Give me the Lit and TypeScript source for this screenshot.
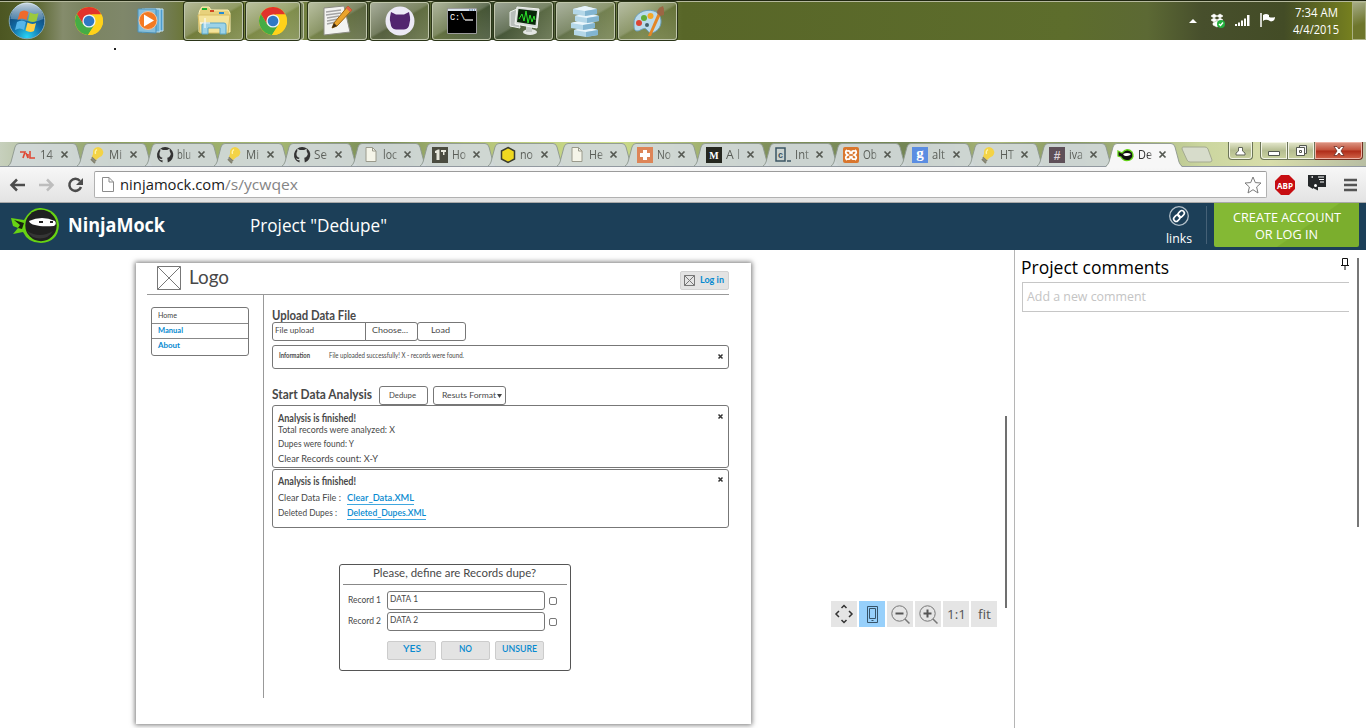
import { LitElement, html, svg, css } from "lit";
import { customElement } from "lit/decorators.js";

// One line of text set to an exact measure. The box starts one font size above the baseline.
const line = (text: string, width: number, size: number, cls = "") => html`<svg class="t ${cls}" width=${width} height=${Math.round(size * 1.3)}>
  <text x="0" y=${size} font-size=${size} textLength=${width} lengthAdjust="spacingAndGlyphs">${text}</text></svg>`;

const textStyles = css`
  .t { display: block; overflow: visible; flex: none; fill: currentColor; font-family: "Open Sans", "Noto Sans", sans-serif; }
  .bold { font-weight: 700; }
  .semi { font-weight: 600; }
  svg { display: block; flex: none; overflow: visible; }
  * { box-sizing: border-box; }
`;

const chrome = html`<svg width="28" height="28" viewBox="-14 -14 28 28">
  <circle r="14" fill="#ffd21a"/>
  <path d="M-12.1-7A14 14 0 0 1 12.3-6.5H0L-5.8 3.2Z" fill="#e2332b"/>
  <path d="M-12.1-7A14 14 0 0 0-1 14L5.8 3.4-5.8 3.2Z" fill="#45ac45"/>
  <path d="M12.3-6.5A14 14 0 0 1-1 14L5.8 3.2 3-6.5Z" fill="#ffd21a"/>
  <circle r="6.6" fill="#eef4f6"/><circle r="5.3" fill="#2f78c4"/></svg>`;

const orb = html`<svg width="38" height="38" viewBox="-19 -19 38 38">
  <defs><radialGradient id="orb" cx=".5" cy=".95" r=".9"><stop offset="0" stop-color="#29d4f5"/><stop offset=".5" stop-color="#116aa4"/><stop offset="1" stop-color="#103660"/></radialGradient>
  <linearGradient id="shine" x2="0" y2="1"><stop offset="0" stop-color="#e2edf4" stop-opacity=".9"/><stop offset="1" stop-color="#9ec4da" stop-opacity=".35"/></linearGradient></defs>
  <circle r="17.8" fill="url(#orb)" stroke="#7fa6ba" stroke-width="1"/>
  <path d="M-16.5-2A16.5 16.5 0 0 1 16.5-2Q8 2 0 0-8-2-16.5-2Z" fill="url(#shine)"/>
  <path d="M-7-9Q-3-12 1.500-9L-.5-1Q-5-4-9.500-1Z" fill="#ef6a2c"/>
  <path d="M3-8.500Q7-6 11.500-8L9.500 0Q5 2 1-.5Z" fill="#9bc93c"/>
  <path d="M-10 1Q-5-2-1 1L-3 9Q-7 6-12 9Z" fill="#55b5ea"/>
  <path d="M.5 1.500Q5 4 9 2L7 10Q3 12-1.500 9.500Z" fill="#ffd045"/></svg>`;

const media = html`<svg width="28" height="28" viewBox="0 0 28 28">
  <path d="M8 2H26V24H8Z" fill="#4d9ccb" stroke="#c2e2f2"/><path d="M5 2H23V25H5Z" fill="#6bb2d9" stroke="#c2e2f2"/>
  <path d="M1 2H19V26L1 25Z" fill="#86bfdc" stroke="#4c90b6"/>
  <circle cx="11" cy="13.500" r="9" fill="#f47a22" stroke="#f8c49b"/><path d="M7 7.500V19.500L17 13.500Z" fill="#fff"/></svg>`;

const explorer = html`<svg width="34" height="32" viewBox="0 0 34 32">
  <path d="M3 5L5 2H12L14 5H31L33 8V27H2V8Z" fill="#e7d17c" stroke="#fff1b5"/>
  <path d="M5 3H10V5H5Z" fill="#20b030"/><path d="M13 5H17V7H13Z" fill="#d24924"/><path d="M22 7H27V9H22Z" fill="#258cd4"/>
  <path d="M1 10H33L31 28H3Z" fill="#f4e39a" stroke="#d8bd62"/>
  <path d="M5 29V20Q5 18 7 18H27Q29 18 29 20V29H23V23H11V29Z" fill="#9cd3e8" stroke="#5aa5c5"/>
  <path d="M8 13V23M3 18H13" stroke="#fff" stroke-width="1"/></svg>`;

const editor = html`<svg width="32" height="32" viewBox="0 0 32 32">
  <path d="M2 3L22 1 28 27 2 30Z" fill="#f3f3f1" stroke="#8b8b82"/>
  <path d="M4 7L19 5M4 10L19 8M5 13L17 11M5 16L16 14M5 19L14 17" stroke="#a4a4a4" stroke-width="1.300"/>
  <path d="M26 1L30 5 15 21 10 23 12 18Z" fill="#eaa32c" stroke="#9a6210"/><path d="M26 1L30 5 28 7 24 3Z" fill="#df604f"/>
  <path d="M10 23L12 18 15 21Z" fill="#3b2b15"/></svg>`;

const octo = html`<svg width="30" height="30" viewBox="0 0 30 30"><circle cx="15" cy="15" r="14.500" fill="#eceaf6"/>
  <path d="M6 6L11 8.500H19L24 6L25 11Q25.500 14 24.500 17Q24 23 19 23.500H11Q6 23 5.500 17Q4.500 14 5 11Z" fill="#52256f"/></svg>`;

const cmd = html`<svg width="30" height="26" viewBox="0 0 30 26"><path d="M.5.5H29.500V25.500H.5Z" fill="#000" stroke="#9c9c9c"/>
  <path d="M1 1H29V3H1Z" fill="#d9e3ee"/><path d="M22 2H28" stroke="#39618f" stroke-dasharray="1.500 1"/>
  <text x="3" y="12" fill="#fff" font-family="Liberation Mono" font-size="8.500">C:\\</text><path d="M18 12H26" stroke="#fff" stroke-width="1.200"/></svg>`;

const monitor = html`<svg width="32" height="30" viewBox="0 0 32 30"><path d="M2 6L9 3 12 22 2 20Z" fill="#b9bebc" stroke="#edf0ee"/>
  <ellipse cx="22" cy="26" rx="7" ry="3" fill="#e3e6e3"/><path d="M18 20H24V26H18Z" fill="#c5cac5"/>
  <path d="M9 1L31 3 29 22 7 18Z" fill="#d8dcd8" stroke="#f3f5f3"/><path d="M10.500 3L29 5 27.500 19 9 16Z" fill="#082708"/>
  <path d="M11 13L14 8 16 15 18 5 20 17 22 9 24 16 26 10 27 14" fill="none" stroke="#2be32b" stroke-width="1"/></svg>`;

const blocks = html`<svg width="30" height="30" viewBox="0 0 30 30">${[[22, 3], [15, 0], [8, 4], [1, 2]].map(([y, x]) => svg`
  <path d="M${x} ${y + 2}L${x + 12} ${y - 1} ${x + 24} ${y + 2}V${y + 7}L${x + 12} ${y + 9} ${x} ${y + 7}Z" fill="#b4d7e8"/>
  <path d="M${x} ${y + 2}L${x + 12} ${y - 1} ${x + 24} ${y + 2} ${x + 12} ${y + 4}Z" fill="#eaf6fb"/>
  <path d="M${x + 12} ${y + 4}L${x + 24} ${y + 2}V${y + 7}L${x + 12} ${y + 9}Z" fill="#82b5d1"/>`)}</svg>`;

const palette = html`<svg width="34" height="32" viewBox="0 0 34 32">
  <path d="M3 19C2 9 14 3 23 6 32 9 32 22 25 26 21 29 18 28 16 25 13 21 10 26 6 26 3 26 3 22 3 19Z" fill="#badbed" stroke="#6b9fba"/>
  <circle cx="8" cy="18" r="3" fill="#dc4634"/><circle cx="13" cy="13" r="3" fill="#62ad38"/><circle cx="19.500" cy="11" r="3" fill="#f3a82a"/><circle cx="16" cy="20" r="2" fill="#41616c"/>
  <path d="M27 8L30 9 20 31H17Z" fill="#e38628"/><path d="M26 8Q26 3 32 1L33 4 33 10 29 11Z" fill="#9c6644"/></svg>`;

@customElement("task-bar")
class TaskBar extends LitElement {
  static styles = [textStyles, css`
    :host { display: flex; height: 40px; color: #fff; align-items: center; border-top: 1px solid #202711; box-shadow: inset 0 1px #b5b99d; box-sizing: border-box;
      background: linear-gradient(90deg, #4c5622 0, #58642c 2.5%, #858c6c 4.6%, #7b8461 6%, #7f876a 9%, #78816a 11%, #69742e 14%, #7b8a43 21%, #4b5633 28%, #5b6936 32%, #364728 36%, #667547 43%, #727f42 47%, #586628 50%, #5d6d2c 78%, #5c6934 84%, #474f2c 88%, #434c26 94%, #76801f 99%); }
    .slot { width: 62px; display: flex; justify-content: center; flex: none; }
    .orb { width: 54px; }
    .wmp { width: 60px; padding-right: 6px; }
    .first { width: 70px; }
    .btn { width: 59px; margin-right: 3px; height: 38px; border: 1px solid #c0c6ac; border-radius: 3px; box-shadow: 0 0 0 1px #2b3519; align-items: center;
      background: linear-gradient(150deg, #ffffff80 0, #ffffff38 48%, #ffffff10 52%, #ffffff2c); }
    .stack { width: 54px; margin-right: 8px; box-shadow: 0 0 0 1px #2b3519, 4px 0 0 -1px #75815a, 4px 0 0 0 #c0c6ac; }
    .tray { margin-left: auto; display: flex; align-items: center; }
    .up { margin-right: 13px; } .box { margin-right: 9px; } .sig { margin-right: 9px; } .flag { margin-right: 17px; }
    .clock { display: flex; flex-direction: column; align-items: center; width: 48px; margin-right: 12px; padding-top: 1px; }
    .clock .t:last-child { margin-top: 1px; }
    .up, .box, .sig, .flag { position: relative; left: 1px; }
    .show { width: 14px; height: 38px; border: 1px solid #aab083; background: linear-gradient(160deg, #a4aa86, #6e762c 60%); }
  `];
  render() {
    return html`<div class="slot orb">${orb}</div><div class="slot first">${chrome}</div><div class="slot wmp">${media}</div>
      <div class="slot btn">${explorer}</div><div class="slot btn stack">${chrome}</div>
      ${[editor, octo, cmd, monitor, blocks, palette].map((i) => html`<div class="slot btn">${i}</div>`)}
      <div class="tray">
        <svg class="up" width="8" height="6"><path d="M4 1L8 5H0Z" fill="#fff"/></svg>
        <svg class="box" width="16" height="16" viewBox="0 0 16 16"><path d="M4 1L7 3 4 5 1 3ZM10 1L13 3 10 5 7 3ZM4 5L7 7 4 9 1 7ZM10 5L13 7 10 9 7 7ZM3 10L7 8 10 10V12L7 14 3 12Z" fill="#fff" stroke="#fff" stroke-width=".6"/><circle cx="11" cy="11" r="4" fill="#24b13f"/><path d="M9 11L10.500 12.500 13 9.500" stroke="#fff" fill="none" stroke-width="1.300"/></svg>
        <svg class="sig" width="16" height="13"><path d="M0 10H2V12H0ZM3 8.500H5V12H3ZM6 6.500H8V12H6ZM9 4.500H11V12H9ZM12 1H14.500V12H12Z" fill="#fff"/></svg>
        <svg class="flag" width="16" height="15"><path d="M1 0V14" stroke="#fff" stroke-width="1.500"/><path d="M3 2Q6 0 9 2V4Q12 5 15 4 15 8 11 8.500L8 7Q5 6 3 8Z" fill="#fff"/></svg>
        <div class="clock">${line("7:34 AM", 43, 12)}${line("4/4/2015", 46, 12)}</div><div class="show"></div>
      </div>`;
  }
}

const bulb = svg`<path d="M3 10L7 14M2 12L6 16" stroke="#82816f" stroke-width="1.800"/><path d="M9 0A5.500 5.500 0 0 1 14 7Q13 10 10 10.500L7 13 3 9.500 4 7Q3 1 9 0Z" fill="#f3d346"/><path d="M8 2.500Q5.500 4 6.500 7" fill="none" stroke="#fff4a9" stroke-width="1.300"/>`;
const git = svg`<path d="M8 0A8 8 0 0 0 5.500 15.600V13Q3 14 2 11 5 13 5.500 10.700 2 10 2.500 6.500 2.600 5 3.400 4 3 3 3.500 1.800L5.800 3H10.200L12.500 1.800Q13 3 12.600 4 14.500 6.500 13 9 12 10.500 10.300 10.700L10.800 15.600A8 8 0 0 0 8 0Z" fill="#333"/>`;
const paper = svg`<path d="M3 .5H9.500L13 4V14.500H3Z" fill="#f5f5e9" stroke="#9a9a8c"/><path d="M9.500.5V4H13" fill="none" stroke="#9a9a8c"/>`;
const glyph = (bg: string, fg: string, ch: string, size = 12, y = 12.5, font = "Liberation Sans") => svg`<rect width="16" height="16" fill=${bg}/><text x="8" y=${y} text-anchor="middle" font-weight="700" font-family=${font} font-size=${size} fill=${fg}>${ch}</text>`;
const tabs: [unknown, string, number][] = [
  [svg`<path d="M0 5H5L3 11M6 6L8 11 8 7M10 4V11H15" fill="none" stroke="#e04a35" stroke-width="1.600"/>`, "14", 13],
  [bulb, "Mi", 13], [git, "blu", 14], [bulb, "Mi", 13], [git, "Se", 13], [paper, "loc", 14],
  [svg`<rect width="16" height="16" fill="#4b4c40"/><path d="M3 4L6 2.500H7.500V13H4.500V6H3ZM9 3H14V5H12.500V8H11V5H9Z" fill="#e8e8dc"/>`, "Ho", 14],
  [svg`<path d="M8 .5L14.500 4V12L8 15.500 1.500 12V4Z" fill="#efd820" stroke="#3a3c30" stroke-width="1.500"/>`, "no", 13],
  [paper, "He", 14],
  [svg`<rect width="16" height="16" fill="#dd8558"/><path d="M6 3H10V6H13V10H10V13H6V10H3V6H6Z" fill="#fff"/>`, "No", 14],
  [glyph("#25271f", "#fff", "M", 10, 11.5, "Liberation Serif"), "A l", 14],
  [svg`<rect x="1" y="1" width="9" height="13" fill="none" stroke="#3b5563" stroke-width="1.500"/><text x="3" y="11" font-family="Liberation Sans" font-weight="700" font-size="9" fill="#3b5563">c</text><path d="M12 14H16" stroke="#3b5563" stroke-width="1.500"/>`, "Int", 14],
  [svg`<rect width="16" height="16" rx="2" fill="#d9762e"/><path d="M4 3Q1 6 5 8 1 10 4 13M12 3Q15 6 11 8 15 10 12 13M4 4Q8 3 7 7M12 4Q8 3 9 7M4 12Q8 13 7 9M12 12Q8 13 9 9" fill="none" stroke="#fff" stroke-width="1.800"/>`, "Ob", 14],
  [glyph("#5b8de2", "#fff", "g", 15, 10.5, "Liberation Serif"), "alt", 13],
  [bulb, "HT", 14], [glyph("#5e4f58", "#ddd3d8", "#"), "iva", 14],
  [svg`<path d="M0 4L4 6Q9 0 14 5 17 10 12 13 6 15 3 10L0 9Z" fill="#111" stroke="#63d416" stroke-width="1.300"/><path d="M5 7Q9 5 13 7 11 10 6 8.500Z" fill="#fff"/>`, "De", 14],
];

@customElement("browser-chrome")
class BrowserChrome extends LitElement {
  static styles = [textStyles, css`
    :host { display: block; }
    .strip { height: 25px; padding-left: 8px; display: flex; background: linear-gradient(90deg, #c7d0bd, #8c9f5f 8%, #a6b873 20%, #788b55 28%, #b2c178 34%, #cede8b 45%, #81915c 56%, #738555 67%, #afbc7b 73%, #859660 78%, #cbd69f 88%, #d8ddaa 93%, #b8bea3); border-bottom: 1px solid #9299a0; }
    .tab { width: 68.600px; height: 25px; flex: none; display: grid; grid-template-columns: 12px 16px 4px 16px 4px 9px; align-items: center; position: relative; z-index: 1; color: #5a5e58; }
    .on { z-index: 2; color: #333; }
    .shape { grid-area: 1/1; align-self: start; }
    .icon { grid-area: 1/2; } .clip { grid-area: 1/4; height: 20px; padding-top: 2px; mask-image: linear-gradient(90deg, #000 60%, #0003); }
    .x { grid-area: 1/6; }
    .new { margin: 4px 0 0 7px; }
    .wins { display: flex; margin-left: auto; height: 18px; margin-right: 3px; }
    .w { height: 18px; border: 1px solid #6c7458; border-top: 0; display: flex; align-items: center; justify-content: center; background: linear-gradient(#e6e9cf, #b5bd91 50%, #c9d29e); box-shadow: inset 0 0 0 1px #f2f4e4; }
    .user { width: 25px; border-radius: 0 0 4px 4px; margin-right: 7px; }
    .min { width: 28px; border-radius: 0 0 0 4px; padding-top: 5px; } .max { width: 27px; border-left: 0; }
    .close { width: 48px; border-radius: 0 0 4px 0; border-color: #713023; border-left: 0; background: linear-gradient(#dc9886, #c2513b 48%, #ae2b18 52%, #d2664b); box-shadow: inset 0 0 0 1px #eeb2a5; }
    .bar { height: 36px; padding: 0 9px; display: flex; align-items: center; background: linear-gradient(#f7f7f7, #e3e3e3); border-bottom: 1px solid #a9a9a9; }
    .bar > svg { margin-right: 12px; }
    .url { flex: 1; height: 27px; margin: 0 8px 0 -2px; border: 1px solid #b1b1b1; border-top-color: #9b9b9b; border-radius: 2px; background: #fff; display: flex; align-items: center; padding: 0 4px 0 7px; color: #1b1b1b; }
    .path { color: #858585; } .star { margin-left: auto; } .page { margin-right: 6px; }
    .bar > .abp { margin-right: 13px; } .bar > .menu { margin-right: 0; } .bar > .ext { margin-right: 18px; margin-top: -4px; }
  `];
  render() {
    return html`<div class="strip">${tabs.map(([icon, name, w], i) => {
      const on = i === tabs.length - 1;
      return html`<div class="tab ${on ? "on" : ""}">
        <svg class="shape" width="76" height="25"><path d="M0 ${on ? 25 : 24}Q2 23 3 20L7 5Q8 1.500 11 1.500H65Q68 1.500 69 5L73 20Q74 23 76 ${on ? 25 : 24}Z" fill=${on ? "#f7f7f7" : "#d0d8d8"} fill-opacity=${on ? 1 : 0.94}/><path d="M0 24Q2 23 3 20L7 5Q8 1.500 11 1.500H65Q68 1.500 69 5L73 20Q74 23 76 24" fill="none" stroke="#8c968d" stroke-width=".9"/></svg>
        <svg class="icon" width="16" height="16">${icon}</svg><div class="clip">${line(name, w, 12)}</div>
        <svg class="x" width="9" height="9"><path d="M1.500 1.500L7.500 7.500M7.500 1.500L1.500 7.500" stroke="#555952" stroke-width="1.700"/></svg></div>`;
    })}
      <svg class="new" width="32" height="17"><path d="M2 1H24Q26 1 27 3L31 14Q31 16 29 16H9Q7 16 6 14L1 3Q1 1 2 1Z" fill="#d7dccb" stroke="#a4aa91"/></svg>
      <div class="wins"><div class="w user"><svg width="11" height="10"><path d="M3.500 5V1.500H7.500V5L10 7V9H1V7Z" fill="#fff" stroke="#62675a"/></svg></div>
        <div class="w min"><svg width="12" height="5"><path d="M.5.5H11.500V4.500H.5Z" fill="#fff" stroke="#53584f"/></svg></div>
        <div class="w max"><svg width="11" height="11"><path d="M3.500.5H10.500V8.500H3.500Z" fill="#eee" stroke="#53584f"/><path d="M.5 2.500H8.500V10.500H.5Z" fill="#fff" stroke="#53584f"/><path d="M3.500 5.500H5.500V7.500H3.500Z" fill="none" stroke="#53584f"/></svg></div>
        <div class="w close"><svg width="12" height="10"><path d="M1 .5H4L6 3 8 .5H11L8 5 11 9.500H8L6 7 4 9.500H1L4 5Z" fill="#fff" stroke="#6a2d26" stroke-width=".8"/></svg></div></div>
    </div>
    <div class="bar">
      <svg width="17" height="14"><path d="M8 1.500L2.500 7 8 12.500M3 7H16" fill="none" stroke="#4c4c4c" stroke-width="2.500"/></svg>
      <svg width="17" height="14"><path d="M9 1.500L14.500 7 9 12.500M14 7H1" fill="none" stroke="#bdbdbd" stroke-width="2.500"/></svg>
      <svg width="17" height="16"><path d="M13 4A6 6 0 1 0 14 10" fill="none" stroke="#4c4c4c" stroke-width="2.500"/><path d="M16 1V8H9Z" fill="#4c4c4c"/></svg>
      <div class="url"><svg class="page" width="12" height="15"><path d="M.5.5H7L11.500 5V14.500H.5Z" fill="#fff" stroke="#8b8b8b"/><path d="M7 .5V5H11.500" fill="none" stroke="#8b8b8b"/></svg>
        ${line("ninjamock.com", 105, 15)}${line("/s/ycwqex", 73, 15, "path")}
        <svg class="star" width="18" height="18"><path d="M9 1L11.300 6.600 17 7 12.600 11 14 17 9 13.700 4 17 5.400 11 1 7 6.700 6.600Z" fill="#fff" stroke="#7a7a7a"/></svg></div>
      <svg class="abp" width="20" height="20"><path d="M6 0H14L20 6V14L14 20H6L0 14V6Z" fill="#c70d11"/><text x="2" y="13.500" font-family="Open Sans" font-weight="700" font-size="9.500" textLength="16" lengthAdjust="spacingAndGlyphs" fill="#fff">ABP</text></svg>
      <svg class="ext" width="18" height="17"><path d="M0 1H18V13H10V16.500L5 14V2L0 4Z" fill="#25282a"/><path d="M0 2L5 4V15L0 12Z" fill="#25282a"/><path d="M10 3H16M11 5.500H16M12 8H16" stroke="#fff"/><circle cx="7.500" cy="11.500" r="1.500" fill="#fff"/></svg>
      <svg class="menu" width="13" height="14"><path d="M0 2H13M0 7H13M0 12H13" stroke="#555" stroke-width="2.700"/></svg>
    </div>`;
  }
}

@customElement("site-header")
class SiteHeader extends LitElement {
  static styles = [textStyles, css`
    :host { display: flex; height: 47px; background: #1c3f58; color: #fff; padding-right: 7px; box-sizing: border-box; }
    .logo { margin: 3px 8px 0 10px; } .name { margin: 10px 85px 0 0; } .project { margin-top: 11px; }
    .links { margin-left: auto; width: 26px; display: flex; flex-direction: column; align-items: center; padding-top: 3px; margin-right: 14px; gap: 4px; }
    .rule { width: 1px; height: 38px; margin: 3px 7px 0 0; background: #456177; }
    .cta { width: 145px; height: 44px; border-radius: 0 0 2px 2px; background: linear-gradient(145deg, #84b934 0 60%, #7bae2d 61%); display: flex; flex-direction: column; align-items: center; padding-top: 6px; gap: 1px; }
  `];
  render() {
    return html`<svg class="logo" width="50" height="38"><path d="M1 12L14 14Q21 1 31 2 48 4 49 19 48 36 31 37 18 37 13 26L3 28 8 22 3 20Z" fill="#67d313"/><path d="M4 14L14 17 12 23 8 22 10 19Z" fill="#17220e"/>
      <circle cx="31" cy="19.500" r="15.700" fill="#202020"/><path d="M17 25Q30 33 43 25A15 15 0 0 1 17 25Z" fill="#353535"/><path d="M19 15Q32 9 45 15 47 18 44 20 31 21 25 19 20 18 19 15Z" fill="#fff"/><path d="M29 16H33M40 16H43" stroke="#222" stroke-width="2"/></svg>
    <div class="name">${line("NinjaMock", 97, 19, "bold")}</div><div class="project">${line('Project "Dedupe"', 137, 18)}</div>
    <div class="links"><svg width="20" height="20" viewBox="0 0 20 20"><circle cx="10" cy="10" r="9.300" fill="none" stroke="#b3c0ca" stroke-width="1.300"/><g transform="rotate(-45 10 10)" fill="none" stroke="#fff" stroke-width="1.600"><rect x="3.500" y="7.500" width="7" height="5" rx="2.500"/><rect x="9.500" y="7.500" width="7" height="5" rx="2.500"/></g></svg>${line("links", 26, 12.5)}</div>
    <div class="rule"></div><div class="cta">${line("CREATE ACCOUNT", 108, 12.5)}${line("OR LOG IN", 63, 12.5)}</div>`;
  }
}

@customElement("wire-page")
class WirePage extends LitElement {
  static styles = [textStyles, css`
    :host { display: block; width: 615px; height: 461px; margin-left: 136px; background: #fff; box-shadow: 0 0 5px 1px #777; color: #484848; }
    .t { font-family: Lato, "Open Sans", sans-serif; }
    .head { display: flex; height: 32px; margin: 0 22px 0 11px; padding: 3px 0 0 10px; border-bottom: 1px solid #999; }
    .head .brand { margin: -2px 0 0 8px; }
    .login { margin: 5px 0 0 auto; width: 49px; height: 19px; border: 1px solid #d2d2d2; border-radius: 2px; background: #e3e3e3; display: flex; padding: 3px 0 0 3px; gap: 5px; color: #078ad0; }
    .lt { margin-top: -1px; }
    .body { display: grid; grid-template-columns: 128px 1fr; height: 403px; padding-right: 22px; }
    .side { border-right: 1px solid #999; padding: 12px 0 0 15px; }
    .nav { width: 98px; height: 49px; border: 1px solid #777; border-radius: 3px; }
    .nav div { height: 16px; border-bottom: 1px solid #888; padding: 1px 0 0 6px; color: #078ad0; }
    .nav div:nth-child(2) { height: 15px; } .nav div:first-child { color: #444; padding-top: 2px; } .nav div:last-child { border: 0; }
    .main { padding: 12px 0 0 8px; }
    .h1 { height: 15px; }
    .row { display: flex; }
    .box { border: 1px solid #777; border-radius: 3px; }
    .file { width: 94px; height: 19px; padding: 2px 0 0 2px; border-radius: 3px 0 0 3px; }
    .choose { width: 53px; height: 19px; margin-left: -1px; padding: 2px 0 0 6px; border-radius: 0 3px 3px 0; }
    .load { width: 49px; height: 19px; margin-left: -1px; padding: 2px 0 0 13px; }
    .info { height: 24px; margin-top: 4px; padding: 5px 5px 0 6px; display: flex; }
    .msg { margin-left: 19px; } .x { margin-left: auto; }
    .start { margin-top: 18px; height: 19px; }
    .start > .t { margin-top: -1px; }
    .b1 { width: 49px; height: 19px; margin: -1px 0 0 7px; padding: 3px 0 0 9px; }
    .b2 { width: 73px; height: 19px; margin: -1px 0 0 5px; padding: 3px 0 0 8px; display: flex; gap: 1px; }
    .res { height: 63px; padding: 4px 5px 0 5px; }
    .start + .res1 { margin-top: -1px; padding-top: 5px; }
    .res .row + .row { height: 15px; } .res .row:first-child { height: 14px; align-items: flex-start; }
    .res1 .row:nth-child(2) { margin-top: -1px; height: 14px; } .res1 .row + .row + .row { height: 15px; }
    .res2 { height: 59px; margin-top: 1px; } .res2 .row:nth-child(2) { margin-top: 4px; }
    .link { color: #078ad0; border-bottom: 1px solid #40a7df; height: 13px; }
    .lab { width: 69px; }
    .ask { width: 232px; height: 107px; margin: 36px 0 0 67px; border-color: #555; padding: 1px 3px 0; }
    .q { height: 19px; border-bottom: 1px solid #888; padding-left: 30px; margin-bottom: 6px; }
    .rec { height: 21px; display: flex; align-items: flex-start; }
    .rec .name { width: 44px; padding: 3px 0 0 5px; } .inp { width: 158px; height: 19px; padding: 1px 0 0 2px; }
    .chk { width: 8px; height: 8px; margin: 6px 0 0 4px; border-radius: 2px; }
    .acts { display: flex; gap: 5px; margin: 8px 0 0 44px; }
    .act { width: 49px; height: 19px; background: #e3e3e3; border: 1px solid #ccc; border-radius: 2px; display: flex; justify-content: center; padding-top: 1px; color: #078ad0; }
  `];
  ph(s: number) {
    return html`<svg width=${s} height=${s}><path d="M.5.5H${s - 0.5}V${s - 0.5}H.5ZM.5.5L${s - 0.5} ${s - 0.5}M${s - 0.5}.5L.5 ${s - 0.5}" fill="none" stroke="#777"/></svg>`;
  }
  x() {
    return html`<svg class="x" width="5" height="12"><path d="M.5 3.500L4.500 7.500M4.500 3.500L.5 7.500" stroke="#333" stroke-width="1.500"/></svg>`;
  }
  render() {
    return html`<div class="head">${this.ph(24)}<div class="brand">${line("Logo", 40, 20)}</div>
      <div class="login">${this.ph(11)}<div class="lt">${line("Log in", 24, 8.5, "bold")}</div></div></div>
    <div class="body"><div class="side"><div class="nav"><div>${line("Home", 19, 8)}</div><div>${line("Manual", 25, 8, "bold")}</div><div>${line("About", 22, 8, "bold")}</div></div></div>
    <div class="main">
      <div class="h1">${line("Upload Data File", 84, 12.5, "bold")}</div>
      <div class="row"><div class="box file">${line("File upload", 39, 8)}</div><div class="box choose">${line("Choose...", 36, 8)}</div><div class="box load">${line("Load", 19, 8)}</div></div>
      <div class="box info">${line("Information", 31, 7, "bold")}<div class="msg">${line("File uploaded successfully! X - records were found.", 135, 7)}</div>${this.x()}</div>
      <div class="row start">${line("Start Data Analysis", 100, 13, "bold")}<div class="box b1">${line("Dedupe", 27, 8)}</div><div class="box b2">${line("Resuts Format", 54, 8)}<svg width="5" height="10"><path d="M0 4H5L2.500 8Z" fill="#444"/></svg></div></div>
      <div class="box res res1"><div class="row">${line("Analysis is finished!", 78, 11, "bold")}${this.x()}</div>
        <div class="row">${line("Total records were analyzed: X", 117, 8.5)}</div><div class="row">${line("Dupes were found: Y", 76, 8.5)}</div><div class="row">${line("Clear Records count: X-Y", 100, 8.5)}</div></div>
      <div class="box res res2"><div class="row">${line("Analysis is finished!", 78, 11, "bold")}${this.x()}</div>
        <div class="row"><div class="lab">${line("Clear Data File :", 63, 8.5)}</div><div class="link">${line("Clear_Data.XML", 67, 8.5, "semi")}</div></div>
        <div class="row"><div class="lab">${line("Deleted Dupes :", 59, 8.5)}</div><div class="link">${line("Deleted_Dupes.XML", 79, 8.5, "semi")}</div></div></div>
      <div class="box ask"><div class="q">${line("Please, define are Records dupe?", 163, 11)}</div>
        ${[1, 2].map((n) => html`<div class="rec"><div class="name">${line(`Record ${n}`, 33, 8.5)}</div><div class="box inp">${line(`DATA ${n}`, 28, 8.5)}</div><div class="box chk"></div></div>`)}
        <div class="acts"><div class="act">${line("YES", 18, 9, "semi")}</div><div class="act">${line("NO", 13, 9, "semi")}</div><div class="act">${line("UNSURE", 35, 9, "semi")}</div></div></div>
    </div></div>`;
  }
}

@customElement("app-root")
class AppRoot extends LitElement {
  static styles = [textStyles, css`
    :host { display: block; width: 1366px; height: 728px; overflow: hidden; background: #fff; }
    .blank { height: 102px; padding: 8px 0 0 114px; }
    .dot { width: 2px; height: 2px; background: #222; }
    .work { display: grid; grid-template-columns: 1014px 352px; height: 478px; }
    .canvas { padding-top: 13px; position: relative; overflow: hidden; }
    .thumb { position: absolute; right: 7px; top: 166px; width: 2px; height: 192px; background: #707070; }
    .tools { position: absolute; left: 831px; top: 351px; display: flex; gap: 2px; color: #555; }
    .tool { width: 26px; height: 26px; background: #e5e5e5; display: flex; align-items: center; justify-content: center; }
    .sel { background: #97d0fb; }
    .side { border-left: 1px solid #b5b5b5; padding: 6px 0 0 6px; display: grid; grid-template-columns: 328px 1fr; }
    .top { display: flex; height: 26px; justify-content: space-between; }
    .field { height: 30px; border: 1px solid #c6c6c6; border-right: 0; margin-left: 1px; padding: 5px 0 0 4px; color: #c4c4c4; }
    .rail { width: 2px; height: 269px; margin: 2px 0 0 8px; background: #777; }
    .pin { margin-top: 2px; }
  `];
  render() {
    return html`<task-bar></task-bar><div class="blank"><div class="dot"></div></div><browser-chrome></browser-chrome><site-header></site-header>
    <div class="work"><div class="canvas"><wire-page></wire-page><div class="thumb"></div>
      <div class="tools">
        <div class="tool"><svg width="18" height="20"><path d="M6.500 4L9 1.500 11.500 4M6.500 16L9 18.500 11.500 16M4 7L1 10 4 13M14 7L17 10 14 13" fill="none" stroke="#333" stroke-width="1.500"/></svg></div>
        <div class="tool sel"><svg width="11" height="17"><path d="M.5.500H10.500V16.500H.500ZM2.500 2.500H8.500V12.500H2.500Z" fill="none" stroke="#36546a"/><path d="M4.500 14.500H6.500" stroke="#36546a"/></svg></div>
        ${[0, 1].map((plus) => html`<div class="tool"><svg width="19" height="19"><circle cx="8.500" cy="8.500" r="7.700" fill="none" stroke="#777"/><path d="M14 14L18.500 18.500" stroke="#777" stroke-width="1.500"/><path d=${plus ? "M4.500 8.500H12.500M8.500 4.500V12.500" : "M4.500 8.500H12.500"} stroke="#555" stroke-width="2"/></svg></div>`)}
        <div class="tool">${line("1:1", 19, 13)}</div><div class="tool">${line("fit", 13, 13)}</div>
      </div></div>
      <div class="side"><div><div class="top">${line("Project comments", 148, 18)}<svg class="pin" width="8" height="12"><path d="M1.500.500H6.500V7.500H1.500ZM0 7.500H8M4 8V12" fill="none" stroke="#111"/></svg></div>
        <div class="field">${line("Add a new comment", 119, 12.5)}</div></div><div class="rail"></div></div>
    </div>`;
  }
}
